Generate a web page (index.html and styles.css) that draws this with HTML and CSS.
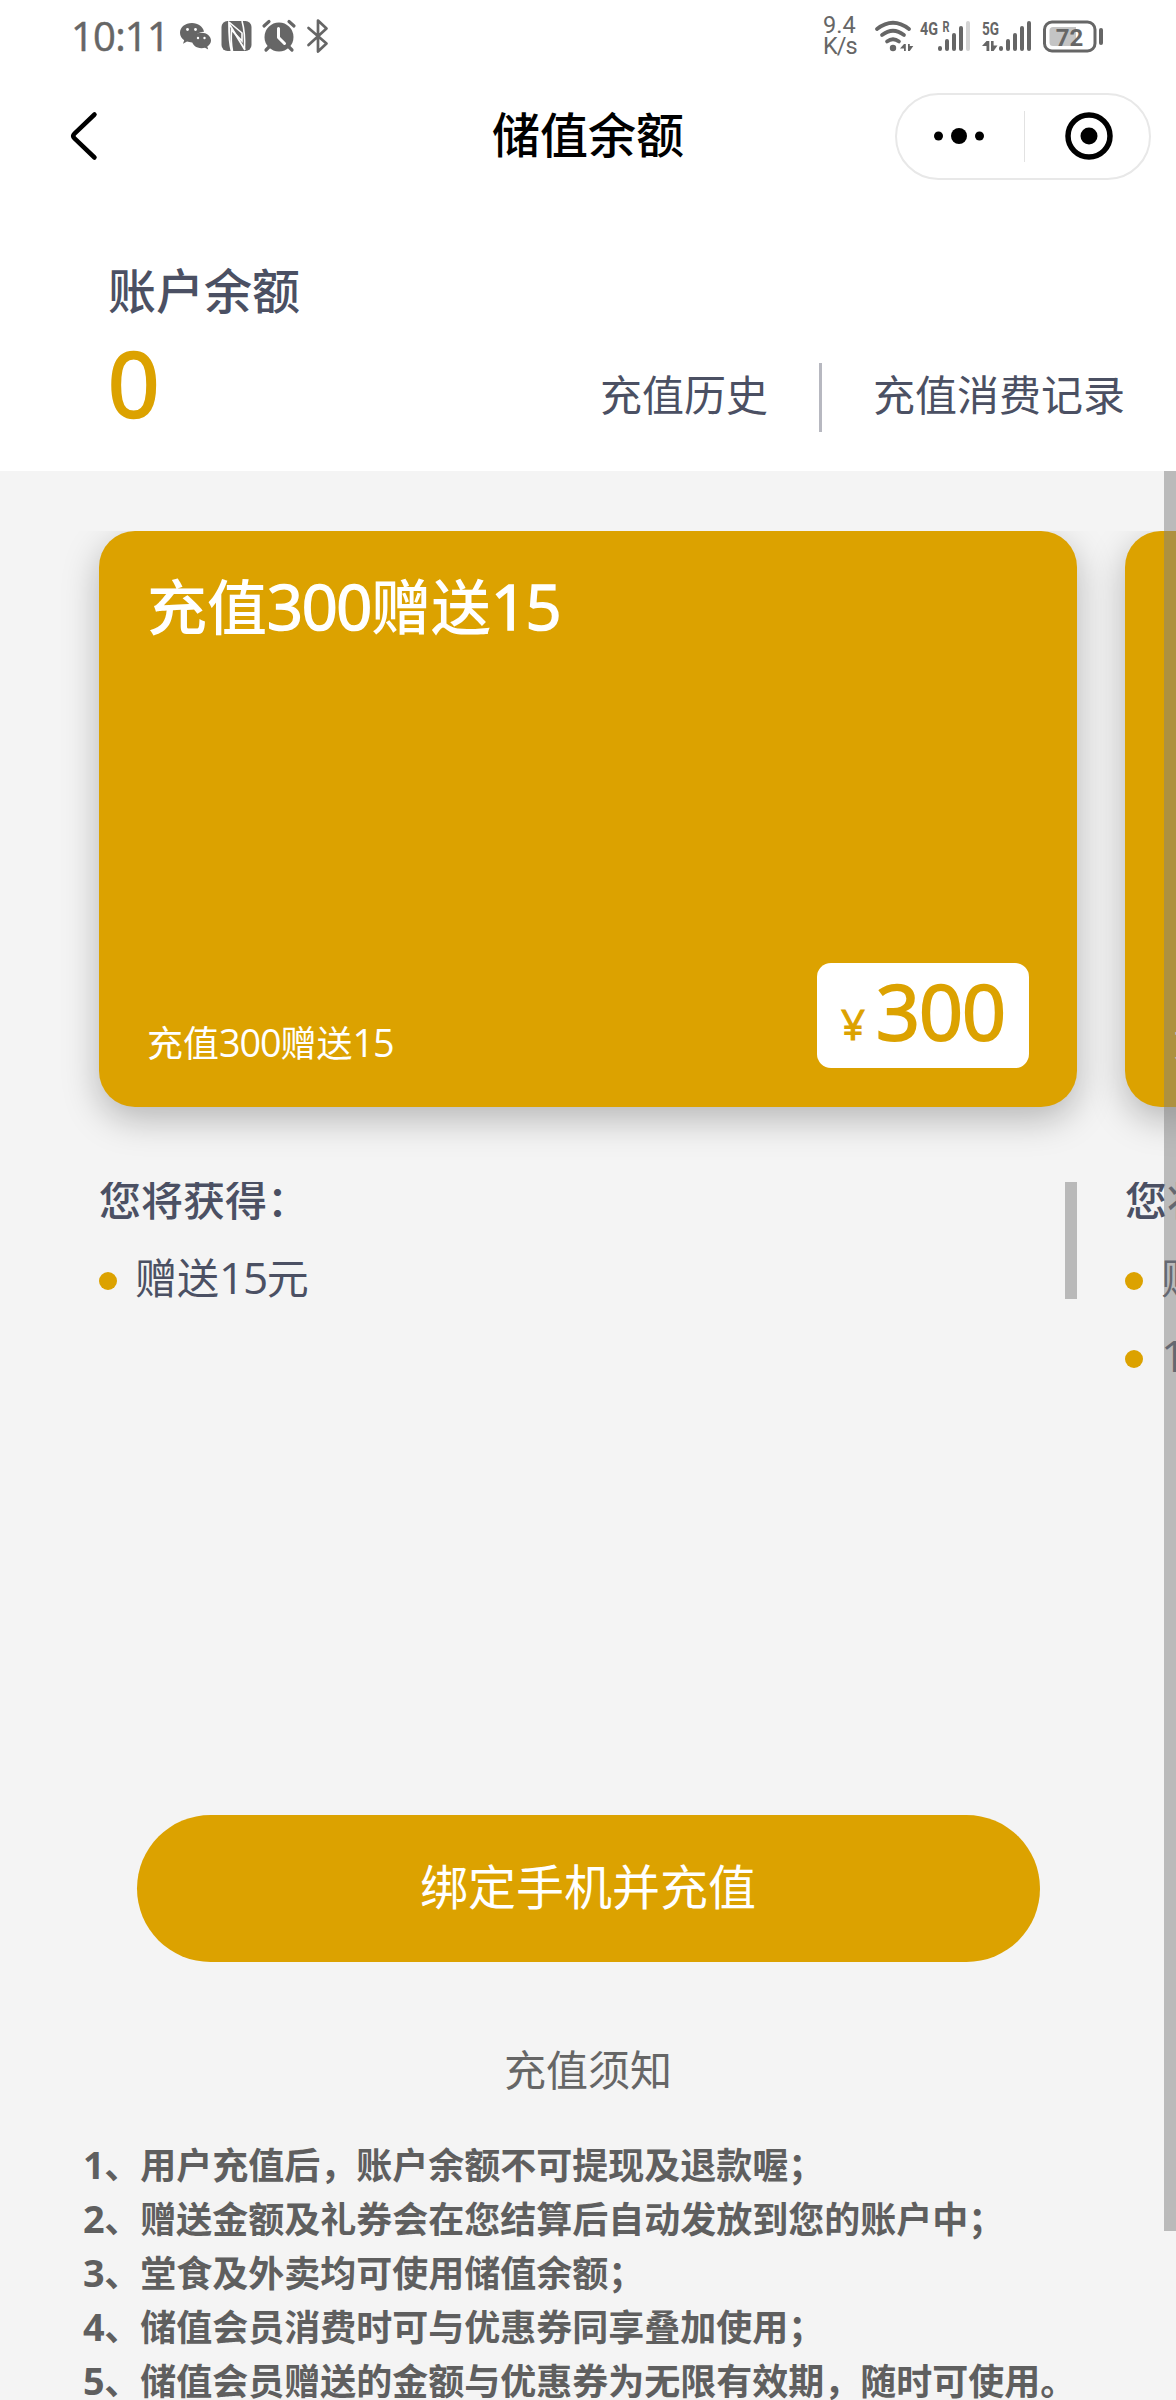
FILE: index.html
```html
<!DOCTYPE html>
<html lang="zh-CN">
<head>
<meta charset="utf-8">
<title>储值余额</title>
<link rel="stylesheet" href="styles.css">
</head>
<body>
<div class="screen">
  <header class="top">
    <div class="status">
      <span class="clock">10:11</span>
      <svg class="status-left" width="150" height="36" viewBox="179 18 150 36" fill="#666">
        <path d="M192 23c-7 0-12 4.300-12 9.800 0 3 1.600 5.700 4.200 7.500l-1.200 3.400 4-2.100c1.500.500 3.200.800 5 .800h1c-.600-6 4.500-10.500 11-10.700C203 26.500 198.200 23 192 23z"/>
        <path d="M201.500 32.800c-5.300 0-9.500 3.400-9.500 7.700s4.200 7.700 9.500 7.700c1.200 0 2.400-.200 3.500-.500l3.200 1.700-.900-2.900c2.300-1.500 3.700-3.600 3.700-6 0-4.300-4.200-7.700-9.500-7.700z"/>
        <g fill="#fff"><circle cx="187.500" cy="29.500" r="1.400"/><circle cx="195.500" cy="29.500" r="1.400"/><circle cx="198" cy="38" r="1.200"/><circle cx="204.500" cy="38" r="1.200"/></g>
        <rect x="221.500" y="21" width="30" height="30" rx="6"/>
        <path d="M231.500 51C229.500 44 229 38 229 23.500L245 50" fill="none" stroke="#fff" stroke-width="1.800"/>
        <path d="M232.500 51C231 44 231 38 231.500 30L242 41V33L229 22M242 21C244 28 245 38 244.500 49" fill="none" stroke="#fff" stroke-width="1.600"/>
        <circle cx="279" cy="37" r="14.500"/>
        <path d="M264 26l5-4.500M294 26l-5-4.500M270 46l-4 4M288 46l4 4" stroke="#666" stroke-width="3.200" stroke-linecap="round"/>
        <path d="M278.500 28.500v9l6 6" fill="none" stroke="#fff" stroke-width="3" stroke-linecap="round" stroke-linejoin="round"/>
        <path d="M308.500 28l18 15.500-8.500 8V20.500l8.500 8L308.500 45" fill="none" stroke="#666" stroke-width="2.700" stroke-linecap="round" stroke-linejoin="round"/>
      </svg>
      <span class="speed"><span>9.4</span><span class="unit">K/s</span></span>
      <svg class="status-right" width="232" height="36" viewBox="873 18 232 36" fill="#666">
        <g fill="none" stroke="#666" stroke-width="3.700" stroke-linecap="round">
          <path d="M877 29q16-12.500 32 0"/><path d="M882 35q11-8.500 22 0"/><path d="M887 41.500q6-4.500 12 0"/>
        </g>
        <circle cx="893" cy="48" r="3.200"/>
        <path d="M904 44h1.800v7H904v-2.500h-4zM908 44h1.800v2h3.500l-3.500 5H908z"/>
        <text class="net" x="920" y="35" textLength="18" lengthAdjust="spacingAndGlyphs">4G</text>
        <text class="net-r" x="942.500" y="32" textLength="7" lengthAdjust="spacingAndGlyphs">R</text>
        <rect x="938" y="46" width="4" height="5" rx="2"/><rect x="945" y="39" width="4" height="12" rx="2"/><rect x="952" y="33" width="4" height="18" rx="2"/><rect x="959" y="26" width="4" height="25" rx="2"/><rect x="966" y="21" width="4" height="30" rx="2" fill="#d4d4d4"/>
        <text class="net" x="982" y="35" textLength="17" lengthAdjust="spacingAndGlyphs">5G</text>
        <path d="M986.500 41h2.800v10h-2.800v-5h-4.500zM991 41h2.600v4.500h3.900L993.600 51H991z"/>
        <rect x="999" y="46" width="4" height="5" rx="2"/><rect x="1006" y="39" width="4" height="12" rx="2"/><rect x="1013" y="33" width="4" height="18" rx="2"/><rect x="1020" y="26" width="4" height="25" rx="2"/><rect x="1027" y="21" width="4" height="30" rx="2"/>
        <rect x="1044.500" y="22" width="50.500" height="29" rx="7.500" fill="none" stroke="#666" stroke-width="3"/>
        <path d="M1053 27h23v19h-23q-3.500 0-3.500-3.500v-12q0-3.500 3.500-3.500z" fill="#c4c4c4"/>
        <rect x="1099" y="28" width="4" height="17" rx="2"/>
        <text class="level" x="1069.500" y="45.500" text-anchor="middle">72</text>
      </svg>
    </div>
    <nav class="nav">
      <svg class="back" width="32" height="54" viewBox="0 0 32 54"><path d="M26.500 5.500L6.500 24.500q-2.500 2.500 0 5L26.500 48.500" fill="none" stroke="#000" stroke-width="4.500" stroke-linecap="round"/></svg>
      <h1 class="title">储值余额</h1>
      <div class="capsule">
        <svg class="dots" width="50" height="20" viewBox="0 0 50 20"><circle cx="4.500" cy="10" r="4.500"/><circle cx="25" cy="10" r="8"/><circle cx="45.500" cy="10" r="4.500"/></svg>
        <span class="capsule-line"></span>
        <svg class="close" width="48" height="48" viewBox="0 0 48 48"><circle cx="24" cy="24" r="21" fill="none" stroke="#000" stroke-width="5.500"/><circle cx="24" cy="24" r="8.500"/></svg>
      </div>
    </nav>
    <section class="balance">
      <div class="account">
        <div class="account-label">账户余额</div>
        <div class="account-value">0</div>
      </div>
      <div class="links"><a>充值历史</a><span class="links-line"></span><a>充值消费记录</a></div>
    </section>
  </header>

  <main class="content">
    <div class="plans">
      <article class="plan">
        <div class="card">
          <h2 class="card-title">充值<span class="num">300</span>赠送<span class="num">15</span></h2>
          <div class="card-foot">
            <span class="card-note">充值<span class="num">300</span>赠送<span class="num">15</span></span>
            <span class="price"><span class="yen">¥</span><span class="amount">300</span></span>
          </div>
        </div>
        <div class="perks">
          <div class="perks-list">
            <h3 class="perks-title">您将获得：</h3>
            <p class="perk"><span>赠送<span class="num">15</span>元</span></p>
          </div>
          <span class="perks-bar"></span>
        </div>
      </article>
      <article class="plan">
        <div class="card">
          <h2 class="card-title">充值</h2>
          <div class="card-foot"><span class="card-note">充值</span></div>
        </div>
        <div class="perks">
          <div class="perks-list">
            <h3 class="perks-title">您将获得：</h3>
            <p class="perk"><span>赠送</span></p>
            <p class="perk"><span><span class="num">1</span></span></p>
          </div>
        </div>
      </article>
    </div>
    <button class="submit">绑定手机并充值</button>
    <h3 class="notes-title">充值须知</h3>
    <div class="notes">
      <p><span class="num">1</span>、用户充值后，账户余额不可提现及退款喔；</p>
      <p><span class="num">2</span>、赠送金额及礼券会在您结算后自动发放到您的账户中；</p>
      <p><span class="num">3</span>、堂食及外卖均可使用储值余额；</p>
      <p><span class="num">4</span>、储值会员消费时可与优惠券同享叠加使用；</p>
      <p><span class="num">5</span>、储值会员赠送的金额与优惠券为无限有效期，随时可使用。</p>
    </div>
    <span class="scrollbar"></span>
  </main>
</div>
</body>
</html>
```
FILE: styles.css
```css
* { box-sizing: border-box; margin: 0; padding: 0; }
body { font-family: "Noto Sans CJK SC", sans-serif; color: #4b5063; background: #f4f4f4; }
.screen { width: 1176px; height: 2400px; overflow: hidden; display: flex; flex-direction: column; }
.num { font-family: "Open Sans", "Noto Sans CJK SC", sans-serif; font-size: 1.05em; letter-spacing: -.03em; line-height: 1; }

.top { height: 471px; background: #fff; flex: none; }
.status { height: 72px; display: flex; align-items: center; padding-left: 71px; color: #666; }
.clock { width: 108px; font: 40px/40px "Open Sans", sans-serif; letter-spacing: -.8px; -webkit-text-stroke: .5px #666; }
.status svg { flex: none; }
.speed { margin-left: 494px; width: 50px; display: flex; flex-direction: column; font: 23.500px/21px Roboto, sans-serif; }
.unit { letter-spacing: -1px; }
.net { font: 700 19px Roboto, sans-serif; }
.net-r { font: 700 15px Roboto, sans-serif; }
.level { font: 700 24px Roboto, sans-serif; }

.nav { height: 128px; display: grid; grid-template-columns: 1fr auto 1fr; align-items: center; padding: 0 25px 0 68px; }
.title { font-size: 48px; line-height: 60px; font-weight: 500; color: #000; transform: translateX(-21.5px); margin-bottom: 8px; }
.capsule { justify-self: end; width: 256px; height: 87px; border: 2px solid #e8e8e8; border-radius: 44px; display: flex; align-items: center; padding: 0 36px 0 37px; justify-content: space-between; }
.capsule-line { width: 1px; height: 51px; background: #e2e2e2; }

.balance { display: flex; justify-content: space-between; padding: 53px 51px 0 108px; }
.account-label { font-size: 48px; line-height: 70px; font-weight: 500; }
.account-value { font: 400 90px/100px "Open Sans", sans-serif; -webkit-text-stroke: 2.500px #dca200; color: #dca200; margin-top: 9px; }
.links { display: flex; align-items: center; height: 70px; margin-top: 109px; font-size: 42px; line-height: 60px; }
.links a { margin-bottom: 8px; }
.links-line { width: 3px; height: 69px; background: #b7b8c0; margin: 0 51px; }

.content { position: relative; flex: 1; display: flex; flex-direction: column; align-items: center; padding-top: 60px; }
.plans { align-self: stretch; height: 1284px; display: flex; gap: 48px; padding-left: 99px; overflow: hidden; flex: none; }
.plan { width: 978px; flex: none; }
.card { height: 576px; border-radius: 36px; background: #dca200; color: #fff; padding: 33px 48px 39px; display: flex; flex-direction: column; justify-content: space-between; box-shadow: 0 12px 36px rgba(0, 0, 0, .26); }
.card-title { font-size: 60px; line-height: 80px; font-weight: 500; }
.card-title .num { font-weight: 400; letter-spacing: -.022em; -webkit-text-stroke: 1.600px #fff; }
.card-foot { display: flex; justify-content: space-between; align-items: flex-end; }
.card-note { font-size: 36px; line-height: 50px; margin-bottom: 2px; }
.price { width: 212px; height: 105px; background: #fff; border-radius: 14px; color: #dca200; display: flex; align-items: baseline; padding-left: 24px; gap: 11px; font-family: "Open Sans", sans-serif; }
.yen { font-size: 42px; -webkit-text-stroke: 1px #dca200; }
.amount { font-size: 77px; line-height: 96px; letter-spacing: -1px; -webkit-text-stroke: 2px #dca200; }
.perks { margin-top: 75px; display: flex; justify-content: space-between; overflow: hidden; }
.perks-title { font-size: 42px; line-height: 60px; font-weight: 500; margin-top: -14px; }
.perk { height: 60px; font-size: 42px; line-height: 60px; display: flex; align-items: center; margin-bottom: 18px; white-space: pre; }
.perks-title + .perk { margin-top: 23px; }
.perk > span { margin-bottom: 10px; }
.perk::before { content: ""; width: 18px; height: 18px; border-radius: 50%; background: #dca200; margin-right: 18px; }
.perks-bar { width: 12px; height: 117px; background: #b9b9b9; }

.submit { flex: none; width: 903px; height: 147px; border: 0; border-radius: 74px; background: #dca200; color: #fff; font: 48px/60px "Noto Sans CJK SC", sans-serif; padding-bottom: 9px; }
.notes-title { font-size: 42px; line-height: 60px; font-weight: 400; color: #666; margin-top: 76px; }
.notes { align-self: stretch; padding-left: 83px; margin-top: 38px; font-size: 36px; line-height: 54px; font-weight: 700; color: #5f5f5f; white-space: nowrap; }
.notes .num { letter-spacing: -.01em; }
.scrollbar { position: absolute; top: 0; right: 0; width: 12px; height: 1760px; background: rgba(127, 127, 127, .5); }
```
